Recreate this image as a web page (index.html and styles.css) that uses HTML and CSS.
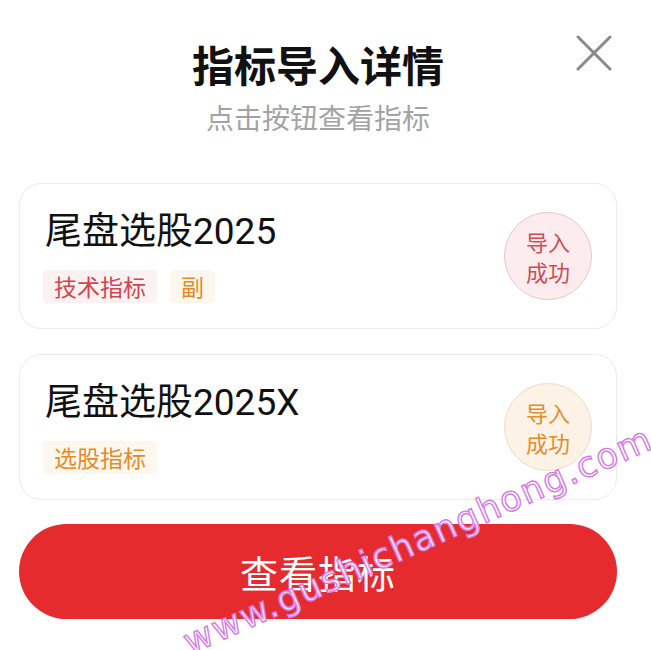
FILE: index.html
```html
<!DOCTYPE html>
<html lang="zh-CN">
<head>
  <meta charset="UTF-8">
  <meta name="viewport" content="width=device-width, initial-scale=1.0">
  <title>指标导入详情</title>
  <link rel="stylesheet" href="styles.css">
</head>
<body>
  <div class="sheet">
    <div class="header">
      <h1 class="title">指标导入详情</h1>
      <p class="subtitle">点击按钮查看指标</p>
      <button class="close" aria-label="关闭">
        <svg width="36" height="36" viewBox="0 0 36 36">
          <path d="M2 2 L34 34 M34 2 L2 34" stroke="#8a8a8a" stroke-width="3" stroke-linecap="round" fill="none"/>
        </svg>
      </button>
    </div>

    <div class="list">
      <div class="card">
        <div class="card-info">
          <div class="card-name">尾盘选股2025</div>
          <div class="tags">
            <span class="tag tag-red">技术指标</span>
            <span class="tag tag-orange">副</span>
          </div>
        </div>
        <div class="badge badge-red">
          <span>导入</span>
          <span>成功</span>
        </div>
      </div>

      <div class="card">
        <div class="card-info">
          <div class="card-name">尾盘选股2025X</div>
          <div class="tags">
            <span class="tag tag-orange">选股指标</span>
          </div>
        </div>
        <div class="badge badge-orange">
          <span>导入</span>
          <span>成功</span>
        </div>
      </div>
    </div>

    <button class="main-btn">查看指标</button>
  </div>

  <div class="watermark">www.gushichanghong.com</div>
</body>
</html>
```

FILE: styles.css
```css
body {
  margin: 0;
  padding: 0;
  background-color: #ffffff;
  font-family: "Noto Sans CJK SC", "Noto Sans", sans-serif;
  width: 651px;
  height: 650px;
  overflow: hidden;
  position: relative;
}
.sheet {
  width: 598px;
  margin-left: 19px;
}
.header {
  position: relative;
  padding-top: 39px;
  text-align: center;
}
.title {
  margin: 0;
  font-size: 42px;
  line-height: 50px;
  font-weight: 700;
  color: #111;
}
.subtitle {
  margin: 10px 0 0;
  font-size: 28px;
  line-height: 36px;
  color: #a3a3a3;
}
.close {
  position: absolute;
  right: 5px;
  top: 35px;
  width: 36px;
  height: 36px;
  padding: 0;
  border: none;
  background: none;
}
.close svg {
  display: block;
}
.list {
  margin-top: 48px;
  display: flex;
  flex-direction: column;
  gap: 25px;
}
.card {
  height: 146px;
  box-sizing: border-box;
  border: 1px solid #ececec;
  border-radius: 22px;
  padding: 0 23px 0 23px;
  display: flex;
  align-items: center;
  justify-content: space-between;
}
.card-name {
  font-family: Roboto, "Noto Sans CJK SC", sans-serif;
  font-size: 37px;
  line-height: 44px;
  color: #111;
  padding-left: 2px;
}
.tags {
  display: flex;
  gap: 13px;
  margin-top: 16px;
}
.tag {
  height: 33px;
  line-height: 33px;
  padding: 0 11px;
  font-size: 23px;
  border-radius: 4px;
}
.tag-red {
  color: #cf4650;
  background-color: #fdf2f2;
}
.tag-orange {
  color: #e38b2b;
  background-color: #fef7ee;
}
.badge {
  width: 88px;
  height: 88px;
  box-sizing: border-box;
  border-radius: 50%;
  font-size: 22px;
  line-height: 30px;
  display: flex;
  flex-direction: column;
  align-items: center;
  justify-content: center;
  margin-right: 1px;
}
.badge-red {
  color: #d14a55;
  background-color: #fcecee;
  border: 1px solid #e8c6ca;
}
.badge-orange {
  color: #e38d2c;
  background-color: #fdf2e6;
  border: 1px solid #ecdcc6;
}
.main-btn {
  display: block;
  width: 100%;
  height: 95px;
  margin-top: 24px;
  border: none;
  border-radius: 48px;
  background-color: #e52b2d;
  color: #ffffff;
  font-family: inherit;
  font-size: 38px;
  letter-spacing: 1px;
}
.watermark {
  position: absolute;
  left: 418px;
  top: 540px;
  transform: translate(-50%, -50%) rotate(-24deg);
  white-space: nowrap;
  font-family: "DejaVu Sans", sans-serif;
  font-size: 35px;
  letter-spacing: 1.8px;
  color: rgba(255, 255, 255, 0.85);
  -webkit-text-stroke: 1.4px #d67ae8;
}
```
